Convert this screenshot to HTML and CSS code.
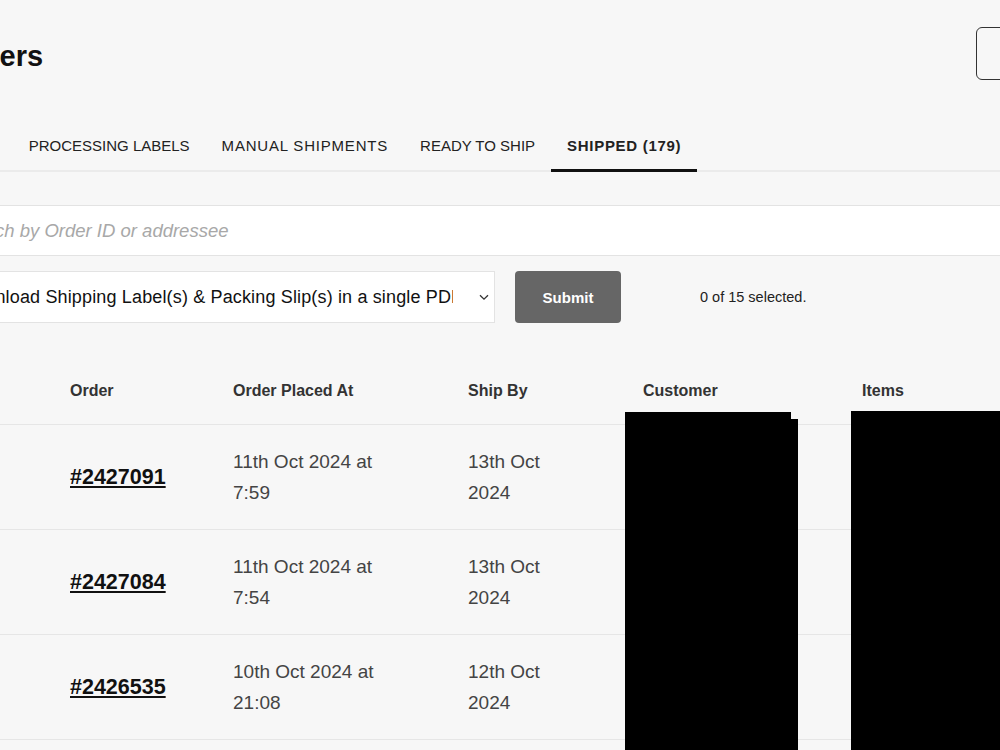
FILE: index.html
```html
<!DOCTYPE html>
<html lang="en">
<head>
  <meta charset="UTF-8" />
  <title>Orders</title>
  <link rel="stylesheet" href="styles.css">
</head>
<body>

  <div class="page">
    <div class="page-head">
      <h1>Orders</h1>
      <button class="outline-btn">Export</button>
    </div>

    <div class="tabs">
      <div class="tab first">ALL</div>
      <div class="tab">PROCESSING LABELS</div>
      <div class="tab wide">MANUAL SHIPMENTS</div>
      <div class="tab">READY TO SHIP</div>
      <div class="tab active">SHIPPED (179)</div>
    </div>

    <input class="search" type="text" placeholder="Search by Order ID or addressee" />

    <div class="actions">
      <div class="select">
        <span class="select-text">Download Shipping Label(s) &amp; Packing Slip(s) in a single PDF</span>
        <svg class="chevron" width="10" height="7" viewBox="0 0 10 7"><path d="M1 1.2l4 4 4-4" fill="none" stroke="#333" stroke-width="1.3"/></svg>
      </div>
      <button class="submit">Submit</button>
      <span class="selected-count">0 of 15 selected.</span>
    </div>

    <div class="orders">
      <div class="row head">
        <div></div>
        <div>Order</div>
        <div>Order Placed At</div>
        <div>Ship By</div>
        <div>Customer</div>
        <div>Items</div>
      </div>
      <div class="row">
        <div></div>
        <div><a href="#">#2427091</a></div>
        <div>11th Oct 2024 at<br>7:59</div>
        <div>13th Oct<br>2024</div>
        <div></div>
        <div></div>
      </div>
      <div class="row">
        <div></div>
        <div><a href="#">#2427084</a></div>
        <div>11th Oct 2024 at<br>7:54</div>
        <div>13th Oct<br>2024</div>
        <div></div>
        <div></div>
      </div>
      <div class="row">
        <div></div>
        <div><a href="#">#2426535</a></div>
        <div>10th Oct 2024 at<br>21:08</div>
        <div>12th Oct<br>2024</div>
        <div></div>
        <div></div>
      </div>
      <div class="row">
        <div></div>
        <div><a href="#">#2426412</a></div>
        <div>10th Oct 2024 at<br>18:31</div>
        <div>12th Oct<br>2024</div>
        <div></div>
        <div></div>
      </div>

      <!-- redacted columns -->
      <div class="redact customer"></div>
      <div class="redact items"></div>
    </div>
  </div>

</body>
</html>
```

FILE: styles.css
```css
body {
  margin: 0;
  background: #f7f7f7;
  font-family: 'Liberation Sans', Arial, sans-serif;
  color: #222;
  overflow: hidden;
}

.page {
  width: 1150px;
  margin-left: -48px;
}

.page-head {
  display: flex;
  align-items: center;
  justify-content: space-between;
  padding-top: 27px;
}

h1 {
  margin: 6px 0 0 -4px;
  font-size: 29px;
  font-weight: bold;
  color: #111;
}

.outline-btn {
  width: 126px;
  height: 53px;
  background: transparent;
  border: 1.5px solid #333;
  border-radius: 6px;
  font-family: inherit;
  font-size: 15px;
  color: transparent;
}

.tabs {
  display: flex;
  margin-top: 39px;
  border-bottom: 2px solid #ebebeb;
}

.tab {
  padding: 17px 16px 13px;
  font-size: 15px;
  line-height: 20px;
  color: #222;
  margin-bottom: -2px;
  border-bottom: 3px solid transparent;
}

.tab.first {
  padding-right: 18px;
}

.tab.wide {
  letter-spacing: 0.8px;
}

.tab.active {
  font-weight: bold;
  letter-spacing: 0.7px;
  border-bottom-color: #111;
}

.search {
  display: block;
  box-sizing: border-box;
  width: 100%;
  height: 51px;
  margin-top: 33px;
  padding: 0 12px 0 3px;
  border: 1px solid #e3e3e3;
  background: #fff;
  font-family: inherit;
  font-size: 18.5px;
  font-style: italic;
  outline: none;
}

.search::placeholder {
  color: #a8a8a8;
}

.actions {
  display: flex;
  align-items: center;
  margin-top: 15px;
}

.select {
  box-sizing: border-box;
  width: 543px;
  height: 52px;
  display: flex;
  align-items: center;
  padding: 0 5px 0 6px;
  background: #fff;
  border: 1px solid #e3e3e3;
}

.select-text {
  flex: 1;
  overflow: hidden;
  white-space: nowrap;
  font-size: 18px;
  letter-spacing: 0.15px;
  color: #111;
  margin-right: 26px;
}

.chevron {
  flex-shrink: 0;
}

.submit {
  width: 106px;
  height: 52px;
  margin-left: 20px;
  background: #666;
  color: #fff;
  border: none;
  border-radius: 4px;
  font-family: inherit;
  font-size: 15px;
  font-weight: bold;
}

.selected-count {
  margin-left: 79px;
  font-size: 14.5px;
  color: #222;
}

.orders {
  position: relative;
  margin-top: 34px;
}

.row {
  display: grid;
  grid-template-columns: 118px 163px 235px 175px 219px 1fr;
  align-items: center;
  height: 104px;
  border-bottom: 1px solid #e6e6e6;
  font-size: 19px;
  line-height: 31px;
  color: #444;
}

.row.head {
  height: 67px;
  font-size: 16px;
  font-weight: bold;
  color: #333;
}

.row a {
  font-size: 21.5px;
  font-weight: bold;
  color: #111;
}

.redact {
  position: absolute;
  background: #000;
  height: 500px;
}

.redact.customer {
  left: 673px;
  top: 55px;
  width: 166px;
}

.redact.customer::after {
  content: "";
  position: absolute;
  left: 166px;
  top: 7px;
  width: 7px;
  height: 500px;
  background: #000;
}

.redact.items {
  left: 899px;
  top: 54px;
  width: 200px;
}
```
